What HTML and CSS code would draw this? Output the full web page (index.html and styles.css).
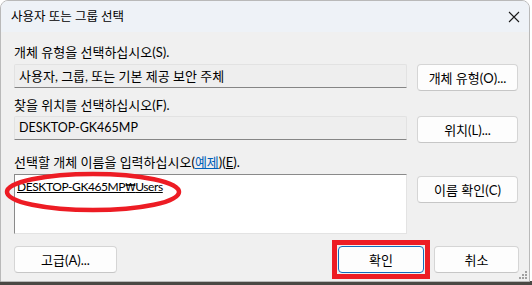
FILE: index.html
```html
<!DOCTYPE html>
<html lang="ko">

<head>
    <meta charset="UTF-8">
    <meta name="viewport" content="width=device-width, initial-scale=1.0">
    <title>사용자 또는 그룹 선택</title>
    <link rel="stylesheet" href="styles.css">
</head>

<body>
    <div class="dialog">
        <!-- Title bar -->
        <div class="titlebar">
            <span class="title">사용자 또는 그룹 선택</span>
            <svg class="close" width="12" height="12" viewBox="0 0 12 12">
                <path d="M1 1 L11 11 M11 1 L1 11" stroke="#1a1a1a" stroke-width="1.1" fill="none" />
            </svg>
        </div>

        <div class="content">
            <!-- Object type -->
            <div class="label first">개체 유형을 선택하십시오(S).</div>
            <div class="row">
                <div class="field">사용자, 그룹, 또는 기본 제공 보안 주체</div>
                <button type="button" class="btn">개체 유형(O)...</button>
            </div>

            <!-- Location -->
            <div class="label">찾을 위치를 선택하십시오(F).</div>
            <div class="row">
                <div class="field latin">DESKTOP-GK465MP</div>
                <button type="button" class="btn">위치(L)...</button>
            </div>

            <!-- Object names -->
            <div class="label third">선택할 개체 이름을 입력하십시오(<a href="#" class="link">예제</a>)(<u>E</u>).</div>
            <div class="row">
                <div class="names">
                    <span class="name">DESKTOP-GK465MP<span class="won">₩</span>Users</span>
                    <svg class="circle" width="182" height="44" viewBox="0 0 182 44">
                        <ellipse cx="90" cy="22" rx="86" ry="18" stroke="#ed1c24" stroke-width="4.5" fill="none" />
                    </svg>
                </div>
                <button type="button" class="btn check">이름 확인(C)</button>
            </div>

            <!-- Bottom buttons -->
            <div class="bottom">
                <button type="button" class="btn advanced">고급(A)...</button>
                <div class="spacer"></div>
                <div class="mark">
                    <button type="button" class="btn ok">확인</button>
                </div>
                <button type="button" class="btn cancel">취소</button>
            </div>
        </div>

        <svg class="grip" width="8" height="8" viewBox="0 0 8 8">
            <rect x="6" y="0" width="2" height="2" fill="#a0a0a0" />
            <rect x="3" y="3" width="2" height="2" fill="#a0a0a0" />
            <rect x="6" y="3" width="2" height="2" fill="#a0a0a0" />
            <rect x="0" y="6" width="2" height="2" fill="#a0a0a0" />
            <rect x="3" y="6" width="2" height="2" fill="#a0a0a0" />
            <rect x="6" y="6" width="2" height="2" fill="#a0a0a0" />
        </svg>
    </div>
</body>

</html>
```

FILE: styles.css
```css
body {
    font-family: Lato, "Noto Sans CJK KR", sans-serif;
    font-size: 13px;
    color: #000;
    margin: 0;
    padding: 0;
    width: 532px;
    height: 285px;
    overflow: hidden;
    background: linear-gradient(to bottom, #ffffff 281px, #4a4844 281px);
}

.dialog {
    position: relative;
    width: 528px;
    height: 280px;
    background-color: #f0f0f0;
    border: 1px solid #b9b9b9;
    border-radius: 8px 8px 0 0;
    overflow: hidden;
}

.titlebar {
    height: 31px;
    background-color: #eef2f7;
    display: flex;
    align-items: center;
    justify-content: space-between;
    padding: 0 9px 0 10px;
}

.title {
    font-size: 12.5px;
    line-height: 16px;
}

.content {
    padding: 0 0 0 13px;
}

.label {
    height: 16px;
    line-height: 16px;
    margin-top: 6px;
    margin-bottom: 3px;
}

.label.first {
    margin-top: 12px;
    margin-bottom: 4px;
}

.label.third {
    margin-top: 11px;
    margin-bottom: 4px;
}

.link {
    color: #0060b8;
    text-decoration: underline;
}

.row {
    display: grid;
    grid-template-columns: 393px 101px;
    column-gap: 10px;
    align-items: start;
}

.field {
    height: 22px;
    line-height: 22px;
    padding-left: 4px;
    background-color: #eeeeee;
    border: 1px solid #e2e2e2;
    border-bottom-color: #858585;
    border-radius: 2px 2px 0 0;
    white-space: nowrap;
}

.field.latin {
    font-size: 12.5px;
}

.names {
    position: relative;
    height: 58px;
    background-color: #ffffff;
    border: 1px solid #e3e3e3;
    border-top-color: #8a8a8a;
    border-left-color: #8a8a8a;
}

.name {
    display: block;
    padding: 4px 0 0 2px;
    font-size: 12px;
    letter-spacing: -0.4px;
    line-height: 16px;
    text-decoration: underline;
}

.won {
    font-family: "DejaVu Sans", sans-serif;
    font-size: 10.5px;
}

.circle {
    position: absolute;
    left: -12px;
    top: -5px;
}

.btn {
    font-family: inherit;
    font-size: 13px;
    color: #000;
    height: 27px;
    padding: 0;
    background-color: #fdfdfd;
    border: 1px solid #d5d5d5;
    border-bottom-color: #c6c6c6;
    border-radius: 4px;
}

.check {
    margin-top: 2px;
}

.bottom {
    display: flex;
    align-items: center;
    margin-top: 6px;
    padding-right: 10px;
}

.advanced {
    width: 103px;
}

.spacer {
    flex: 1;
}

.mark {
    border: 5px solid #ed1c24;
    padding: 1px;
    margin-right: 4px;
}

.ok {
    display: block;
    width: 86px;
    border: 1px solid #0f6cbd;
}

.cancel {
    width: 85px;
}

.grip {
    position: absolute;
    right: 2px;
    bottom: 2px;
}
```
